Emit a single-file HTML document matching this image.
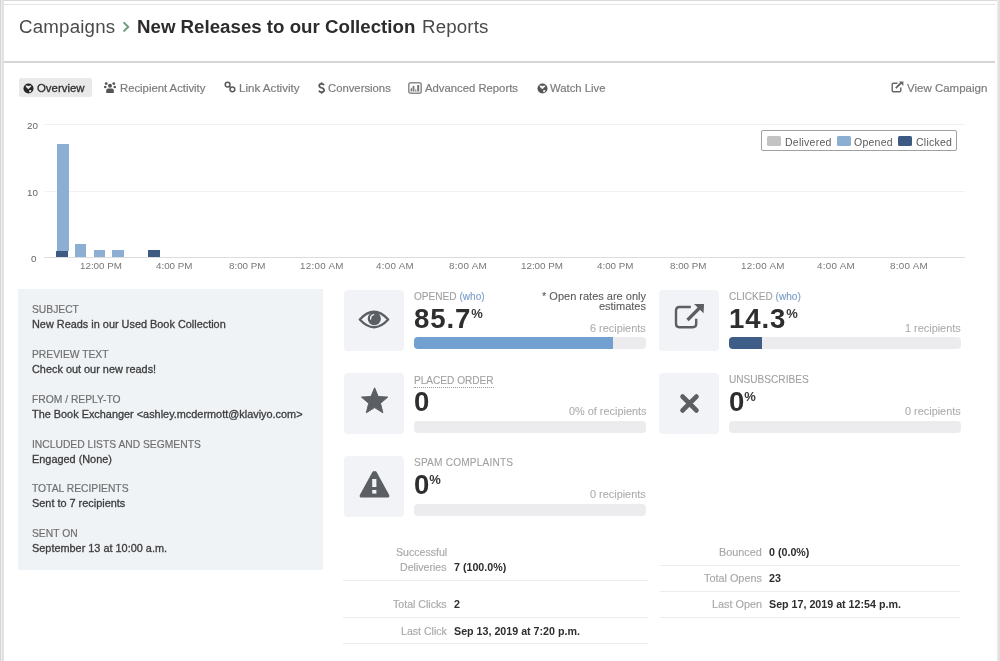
<!DOCTYPE html>
<html><head><meta charset="utf-8">
<style>
*{margin:0;padding:0;box-sizing:border-box}
html,body{width:1000px;height:661px;overflow:hidden;background:#fff;-webkit-font-smoothing:antialiased;font-family:"Liberation Sans",sans-serif;color:#333}
.a{position:absolute;white-space:nowrap;will-change:transform}
#frameL{position:absolute;left:0;top:0;width:4px;height:661px;background:linear-gradient(90deg,#d6d6d6 0,#d6d6d6 1px,#eeeeee 1px,#eeeeee 2px,#dedede 2px,#e6e6e6 4px)}
#frameT{position:absolute;left:0;top:0;width:1000px;height:1px;background:#dadada}
#frameR{position:absolute;right:0;top:0;width:3px;height:661px;background:linear-gradient(90deg,#ececec,#dcdcdc)}
#hdr{position:absolute;left:4px;top:4px;width:991px;height:59px;border-top:1px solid #e2e2e2;border-bottom:2px solid #d5d5d5;background:transparent}
.title{font-size:18.7px;color:#4a4a4a;top:16px}
.tabs{font-size:11.3px;color:#7c7c7c;-webkit-text-stroke:0.2px #7c7c7c}
.lbl{font-size:10.3px;color:#707070;left:32px;-webkit-text-stroke:0.2px #707070}
.val{font-size:10.9px;color:#3c3c3c;left:32px;-webkit-text-stroke:0.3px #3c3c3c}
.ibox{position:absolute;width:60px;height:61px;background:#f1f3f6;border-radius:4px}
.ctl{font-size:10.1px;color:#a0a0a0;-webkit-text-stroke:0.1px #a0a0a0}
.who{color:#7d9fc8;-webkit-text-stroke:0.15px #7d9fc8}
.big{font-size:27.6px;font-weight:bold;color:#2e2e2e;letter-spacing:0.9px}
.pct{font-size:13px;color:#3a3a3a;font-weight:bold;letter-spacing:0}
.rec{font-size:10.9px;color:#adadad;-webkit-text-stroke:0.1px #adadad}
.bar{position:absolute;height:12px;width:232px;background:#ececee;border-radius:4px;overflow:hidden}
.fill{position:absolute;left:0;top:0;height:12px}
.sl{font-size:10.5px;color:#a8a8a8;text-align:right;-webkit-text-stroke:0.15px #a8a8a8}
.sv{font-size:10.7px;color:#2e2e2e;font-weight:bold}
.hr{position:absolute;height:1px;background:#ececec}
.xl{font-size:9.8px;letter-spacing:0.3px;color:#777;top:260px}
.yl{font-size:9.8px;color:#666}
.grid{position:absolute;height:1px;background:#f1f1f1;left:45px;width:920px}
</style></head><body>
<div id="frameT"></div><div id="frameL"></div><div id="frameR"></div>
<div id="hdr"></div>
<div class="a title" style="left:18.5px;letter-spacing:0.2px">Campaigns</div>
<svg class="a" style="left:122px;top:21px" width="9" height="12" viewBox="0 0 9 12"><path d="M2.1 1.9 L6.3 5.9 L2.1 9.9" stroke="#679a76" stroke-width="2" fill="none" stroke-linecap="round" stroke-linejoin="round"/></svg>
<div class="a title" style="left:137px;font-weight:bold;color:#2c2c2c">New Releases to our Collection</div>
<div class="a title" style="left:421.5px;letter-spacing:0.15px">Reports</div>

<!-- tabs -->
<div class="a" style="left:19px;top:78px;width:73px;height:19px;background:#e9e9e9;border-radius:2px"></div>
<div class="a tabs" style="left:37px;top:82px;color:#2e2e2e;font-size:11.4px;-webkit-text-stroke:0.3px #2e2e2e">Overview</div>
<div class="a tabs" style="left:120px;top:82px">Recipient Activity</div>
<div class="a tabs" style="left:239px;top:81px;font-size:11.6px">Link Activity</div>
<svg class="a" style="left:317.6px;top:82px" width="8" height="12" viewBox="0 0 8 12" fill="none" stroke="#555" stroke-width="1.7"><path d="M6 3.3 Q5.5 1.8 3.6 1.8 Q1.2 1.8 1.2 3.7 Q1.2 5.2 3.6 5.8 Q6.1 6.4 6.1 8.3 Q6.1 10.2 3.6 10.2 Q1.5 10.2 0.9 8.6"/><path d="M3.6 0.2 V1.9 M3.6 10.1 V11.8" stroke-width="1.5"/></svg><div class="a tabs" style="left:328px;top:82px">Conversions</div>
<div class="a tabs" style="left:425px;top:82px">Advanced Reports</div>
<div class="a tabs" style="left:550px;top:82px">Watch Live</div>
<div class="a tabs" style="left:907px;top:82px;font-size:11.5px">View Campaign</div>


<svg class="a" style="left:23px;top:82.5px" width="11" height="11" viewBox="0 0 11 11"><circle cx="5.5" cy="5.5" r="5" fill="#262626"/><path d="M2.4 2.8 Q4.2 2.2 5.4 3.1 Q7.2 2.2 8.6 2.9 L6.6 5 L5.4 6.3 L3.4 4.4 Z M6.1 7.3 L8.5 7.1 L7.8 8.9 L6.3 9.3 Z" fill="#e6e6e6"/></svg>
<svg class="a" style="left:104px;top:82px" width="12" height="12" viewBox="0 0 12 12" fill="#555"><circle cx="2.2" cy="1.6" r="1.4"/><circle cx="9.8" cy="1.6" r="1.4"/><circle cx="6" cy="3.8" r="2"/><circle cx="1.2" cy="5" r="1.3"/><circle cx="10.8" cy="5" r="1.3"/><path d="M2.2 11 L2.2 8.6 Q2.2 6.6 4.2 6.6 L7.8 6.6 Q9.8 6.6 9.8 8.6 L9.8 11 Z"/></svg>
<svg class="a" style="left:224.3px;top:80.6px" width="12" height="12" viewBox="0 0 12 12" fill="none" stroke="#5a5a5a" stroke-width="1.5"><circle cx="3.6" cy="3.6" r="2.4"/><circle cx="8.4" cy="8.3" r="2.4"/><path d="M5.2 5.2 L6.8 6.8"/></svg>
<svg class="a" style="left:408px;top:82px" width="14" height="12" viewBox="0 0 14 12"><rect x="0.8" y="0.8" width="12.4" height="10.4" rx="2" fill="none" stroke="#8c8c8c" stroke-width="1.5"/><path d="M2.6 9.6 L2.6 7 L4 5.6 L4 9.6 Z M4.6 9.6 L4.6 4 L6.4 4 L6.4 9.6 Z M7 9.6 L7.8 6.4 L8.6 9.6 Z M9.2 9.6 L9.2 3 L11.2 3 L11.2 9.6 Z" fill="#777"/></svg>
<svg class="a" style="left:536.5px;top:82.5px" width="11" height="11" viewBox="0 0 11 11"><circle cx="5.5" cy="5.5" r="5" fill="#555"/><path d="M2.4 2.8 Q4.2 2.2 5.4 3.1 Q7.2 2.2 8.6 2.9 L6.6 5 L5.4 6.3 L3.4 4.4 Z M6.1 7.3 L8.5 7.1 L7.8 8.9 L6.3 9.3 Z" fill="#f4f4f4"/></svg>
<svg class="a" style="left:891px;top:81px" width="13" height="12" viewBox="0 0 13 12" fill="none" stroke="#666" stroke-width="1.4"><path d="M6.5 2.2 L2.5 2.2 Q1.2 2.2 1.2 3.5 L1.2 9.5 Q1.2 10.8 2.5 10.8 L8.5 10.8 Q9.8 10.8 9.8 9.5 L9.8 6.5"/><path d="M4.8 7.2 L10.5 1.5" stroke-width="1.8"/><path d="M8 0.6 L12.4 0.6 L12.4 5 Z" fill="#666" stroke="none"/></svg>

<!-- chart -->
<div class="grid" style="top:124px"></div>
<div class="grid" style="top:191px"></div>
<div class="a" style="left:44px;top:257px;width:921px;height:1px;background:#dcdcdc"></div>
<div class="a yl" style="left:27px;top:120px">20</div>
<div class="a yl" style="left:27px;top:186.5px">10</div>
<div class="a yl" style="left:31px;top:253px">0</div>

<div class="a" style="left:56.5px;top:144px;width:11.5px;height:107px;background:#8daed3"></div>
<div class="a" style="left:56px;top:251px;width:12px;height:6px;background:#3d5a82"></div>
<div class="a" style="left:75px;top:244px;width:11px;height:13px;background:#8daed3"></div>
<div class="a" style="left:94px;top:250px;width:11px;height:7px;background:#8daed3"></div>
<div class="a" style="left:112px;top:250px;width:12px;height:7px;background:#8daed3"></div>
<div class="a" style="left:148px;top:250px;width:12px;height:7px;background:#3d5a82"></div>

<div class="a xl" style="left:80px;letter-spacing:0">12:00 PM</div>
<div class="a xl" style="left:156px;letter-spacing:0">4:00 PM</div>
<div class="a xl" style="left:229px;letter-spacing:0">8:00 PM</div>
<div class="a xl" style="left:300px">12:00 AM</div>
<div class="a xl" style="left:376px">4:00 AM</div>
<div class="a xl" style="left:449px">8:00 AM</div>
<div class="a xl" style="left:521px;letter-spacing:0">12:00 PM</div>
<div class="a xl" style="left:597px;letter-spacing:0">4:00 PM</div>
<div class="a xl" style="left:670px;letter-spacing:0">8:00 PM</div>
<div class="a xl" style="left:741px">12:00 AM</div>
<div class="a xl" style="left:817px">4:00 AM</div>
<div class="a xl" style="left:890px">8:00 AM</div>

<div class="a" style="left:761px;top:130px;width:196px;height:21px;border:1px solid #a0a0a0;border-radius:2px;background:#fff"></div>
<div class="a" style="left:767px;top:136px;width:14px;height:10px;background:#c3c3c3;border-radius:1.5px"></div>
<div class="a" style="left:785px;top:135.5px;font-size:10.5px;color:#5a5a5a;letter-spacing:0.25px">Delivered</div>
<div class="a" style="left:837px;top:136px;width:14px;height:10px;background:#8daed3;border-radius:1.5px"></div>
<div class="a" style="left:854px;top:135.5px;font-size:10.5px;color:#5a5a5a;letter-spacing:0.25px">Opened</div>
<div class="a" style="left:898px;top:136px;width:14px;height:10px;background:#3d5a82;border-radius:1.5px"></div>
<div class="a" style="left:916px;top:135.5px;font-size:10.5px;color:#5a5a5a;letter-spacing:0.25px">Clicked</div>

<!-- left panel -->
<div class="a" style="left:18px;top:289px;width:305px;height:281px;background:#f0f3f6"></div>
<div class="a lbl" style="top:304px">SUBJECT</div>
<div class="a val" style="top:318.3px">New Reads in our Used Book Collection</div>
<div class="a lbl" style="top:349px">PREVIEW TEXT</div>
<div class="a val" style="top:363.3px">Check out our new reads!</div>
<div class="a lbl" style="top:394px">FROM / REPLY-TO</div>
<div class="a val" style="top:408.3px">The Book Exchanger &lt;ashley.mcdermott@klaviyo.com&gt;</div>
<div class="a lbl" style="top:439px">INCLUDED LISTS AND SEGMENTS</div>
<div class="a val" style="top:453.3px">Engaged (None)</div>
<div class="a lbl" style="top:483px">TOTAL RECIPIENTS</div>
<div class="a val" style="top:497px">Sent to 7 recipients</div>
<div class="a lbl" style="top:528px">SENT ON</div>
<div class="a val" style="top:541.5px">September 13 at 10:00 a.m.</div>

<!-- cards -->
<div class="ibox" style="left:344px;top:290px"></div>
<div class="a ctl" style="left:414px;top:291px">OPENED <span class="who">(who)</span></div>
<div class="a big" style="left:414px;top:303px">85.7<span class="pct" style="position:relative;top:-10px;left:0">%</span></div>
<div class="a rec" style="right:354px;top:291px;text-align:right;line-height:10px;color:#5a5a5a;font-size:11px;-webkit-text-stroke:0.1px #5a5a5a">* Open rates are only<br>estimates</div>
<div class="a rec" style="right:354px;top:322px">6 recipients</div>
<div class="bar" style="left:414px;top:337px"><div class="fill" style="width:199px;background:#72a0d0"></div></div>

<div class="ibox" style="left:658.5px;top:290px"></div>
<div class="a ctl" style="left:729px;top:291px">CLICKED <span class="who">(who)</span></div>
<div class="a big" style="left:729px;top:303px">14.3<span class="pct" style="position:relative;top:-10px;left:0">%</span></div>
<div class="a rec" style="right:39px;top:322px">1 recipients</div>
<div class="bar" style="left:729px;top:337px"><div class="fill" style="width:33px;background:#3e5e88"></div></div>

<div class="ibox" style="left:344px;top:373px"></div>
<div class="a ctl" style="left:414px;top:374px;border-bottom:1px dotted #9a9a9a;line-height:13px">PLACED ORDER</div>
<div class="a big" style="left:414px;top:386px">0</div>
<div class="a rec" style="right:354px;top:405px">0% of recipients</div>
<div class="bar" style="left:414px;top:421px"></div>

<div class="ibox" style="left:658.5px;top:373px"></div>
<div class="a ctl" style="left:729px;top:374px">UNSUBSCRIBES</div>
<div class="a big" style="left:729px;top:386px;letter-spacing:0">0<span class="pct" style="position:relative;top:-10px;left:0">%</span></div>
<div class="a rec" style="right:39px;top:405px">0 recipients</div>
<div class="bar" style="left:729px;top:421px"></div>

<div class="ibox" style="left:344px;top:456px"></div>
<div class="a ctl" style="left:414px;top:457px;letter-spacing:0.2px">SPAM COMPLAINTS</div>
<div class="a big" style="left:414px;top:469px;letter-spacing:0">0<span class="pct" style="position:relative;top:-10px;left:0">%</span></div>
<div class="a rec" style="right:354px;top:488px">0 recipients</div>
<div class="bar" style="left:414px;top:504px"></div>


<svg class="a" style="left:358px;top:309px" width="32" height="21" viewBox="0 0 32 21"><path d="M1.8 10.5 Q16 -5 30.2 10.5 Q16 26 1.8 10.5 Z" fill="none" stroke="#5b5e62" stroke-width="2.3" stroke-linejoin="round"/><circle cx="16.3" cy="9.7" r="6.6" fill="#5b5e62"/><path d="M12.6 10 Q12.4 6.4 15.6 5.6" stroke="#f1f3f6" stroke-width="1.4" fill="none" stroke-linecap="round"/></svg>
<svg class="a" style="left:673px;top:302px" width="33" height="28" viewBox="0 0 33 28" fill="none" stroke="#5b5e62"><path d="M17.8 5 L6.4 5 Q3 5 3 8.4 L3 21.8 Q3 25.2 6.4 25.2 L19.8 25.2 Q23.2 25.2 23.2 21.8 L23.2 16.8" stroke-width="2.4"/><path d="M14.5 18 L27 5.5" stroke-width="3.2"/><path d="M21 2 L31 2 L30.6 11.2 Z" fill="#5b5e62" stroke="none"/></svg>
<svg class="a" style="left:360px;top:387px" width="29" height="28" viewBox="0 0 29 28"><path d="M14.6 0.8 L18.2 9.5 L27.8 10.1 L20.5 16.3 L22.9 25.8 L14.6 20.6 L6.3 25.8 L8.7 16.3 L1.4 10.1 L11 9.5 Z" fill="#5b5e62" stroke="#5b5e62" stroke-width="1" stroke-linejoin="round"/></svg>
<svg class="a" style="left:677px;top:391px" width="25" height="25" viewBox="0 0 25 25"><path d="M5.6 5.6 L19.4 19.4 M19.4 5.6 L5.6 19.4" stroke="#5b5e62" stroke-width="4.8" stroke-linecap="round"/></svg>
<svg class="a" style="left:358px;top:469px" width="33" height="30" viewBox="0 0 33 30"><path d="M16.5 2.4 Q17.6 1.6 18.6 3 L31.2 26 Q31.8 28.6 29.4 28.6 L3.6 28.6 Q1.2 28.6 1.8 26 L14.4 3 Q15.4 1.6 16.5 2.4 Z" fill="#5b5e62"/><rect x="14.2" y="10" width="4.2" height="8" fill="#f1f3f6"/><rect x="14.2" y="21" width="4.2" height="3.6" fill="#f1f3f6"/></svg>

<!-- bottom stats -->
<div class="a sl" style="right:553px;top:546px;font-size:10.6px">Successful</div>
<div class="a sl" style="right:553px;top:561px;font-size:10.6px">Deliveries</div>
<div class="a sv" style="left:454px;top:561px">7 (100.0%)</div>
<div class="hr" style="left:343px;top:580px;width:305px"></div>
<div class="a sl" style="right:553px;top:598px;font-size:10.6px">Total Clicks</div>
<div class="a sv" style="left:454px;top:598px">2</div>
<div class="hr" style="left:343px;top:617px;width:305px"></div>
<div class="a sl" style="right:553px;top:625px;font-size:10.6px">Last Click</div>
<div class="a sv" style="left:454px;top:625px">Sep 13, 2019 at 7:20 p.m.</div>
<div class="hr" style="left:343px;top:643px;width:305px"></div>

<div class="a sl" style="right:238px;top:546px;font-size:10.85px">Bounced</div>
<div class="a sv" style="left:769px;top:546px">0 (0.0%)</div>
<div class="hr" style="left:660px;top:565px;width:300px"></div>
<div class="a sl" style="right:238px;top:572px;font-size:10.85px">Total Opens</div>
<div class="a sv" style="left:769px;top:572px">23</div>
<div class="hr" style="left:660px;top:591px;width:300px"></div>
<div class="a sl" style="right:238px;top:598px;font-size:10.85px">Last Open</div>
<div class="a sv" style="left:769px;top:598px">Sep 17, 2019 at 12:54 p.m.</div>
<div class="hr" style="left:660px;top:617px;width:300px"></div>
</body></html>
